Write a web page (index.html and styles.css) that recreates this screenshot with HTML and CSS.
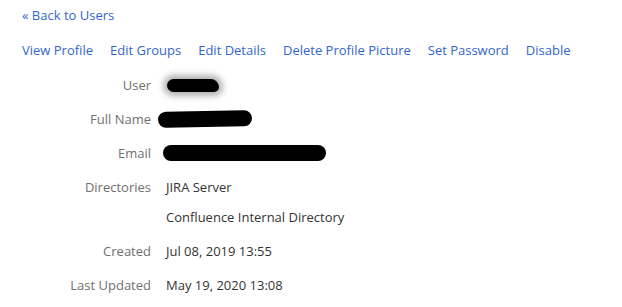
FILE: index.html
```html
<!DOCTYPE html>
<html lang="en">
<head>
    <meta charset="UTF-8">
    <title>User Details</title>
    <link rel="stylesheet" href="styles.css">
</head>
<body>
<div class="page">
    <a href="#" class="back-link">&laquo; Back to Users</a>

    <nav class="user-actions">
        <a href="#">View Profile</a>
        <a href="#">Edit Groups</a>
        <a href="#">Edit Details</a>
        <a href="#">Delete Profile Picture</a>
        <a href="#">Set Password</a>
        <a href="#">Disable</a>
    </nav>

    <dl class="user-details">
        <dt>User</dt>
        <dd><span class="redacted redacted-user"></span></dd>

        <dt>Full Name</dt>
        <dd><span class="redacted redacted-name"></span></dd>

        <dt>Email</dt>
        <dd><span class="redacted redacted-email"></span></dd>

        <dt>Directories</dt>
        <dd class="dir-list">
            <div>JIRA Server</div>
            <div>Confluence Internal Directory</div>
        </dd>

        <dt>Created</dt>
        <dd>Jul 08, 2019 13:55</dd>

        <dt>Last Updated</dt>
        <dd>May 19, 2020 13:08</dd>
    </dl>
</div>
</body>
</html>
```

FILE: styles.css
```css
body {
    margin: 0;
    padding: 0;
    background-color: #ffffff;
    font-family: "Open Sans", "Noto Sans", sans-serif;
    font-size: 13px;
    line-height: 20px;
    color: #333333;
}

a {
    color: #3366cc;
    text-decoration: none;
}

.page {
    padding: 5px 0 0 22px;
}

.back-link {
    display: inline-block;
}

/* action links row */
.user-actions {
    display: flex;
    gap: 17px;
    margin-top: 15px;
}

/* details table */
.user-details {
    display: grid;
    grid-template-columns: 129px auto;
    column-gap: 15px;
    row-gap: 14px;
    margin: 15px 0 0 0;
}

.user-details dt {
    text-align: right;
    color: #707070;
}

.user-details dd {
    margin: 0;
    display: flex;
    align-items: center;
}

.dir-list {
    flex-direction: column;
    align-items: flex-start !important;
    gap: 10px;
}

/* blacked out values */
.redacted {
    display: inline-block;
    background-color: #000;
}

.redacted-user {
    width: 52px;
    height: 13px;
    margin-left: 1px;
    border-radius: 8px 10px 6px 8px;
    box-shadow: 0 0 6px 4px rgba(0, 0, 0, 0.3);
}

.redacted-name {
    width: 94px;
    height: 16px;
    margin-left: -8px;
    border-radius: 8px;
    transform: rotate(-1deg);
}

.redacted-email {
    width: 163px;
    height: 16px;
    margin-left: -3px;
    border-radius: 8px;
}
```
